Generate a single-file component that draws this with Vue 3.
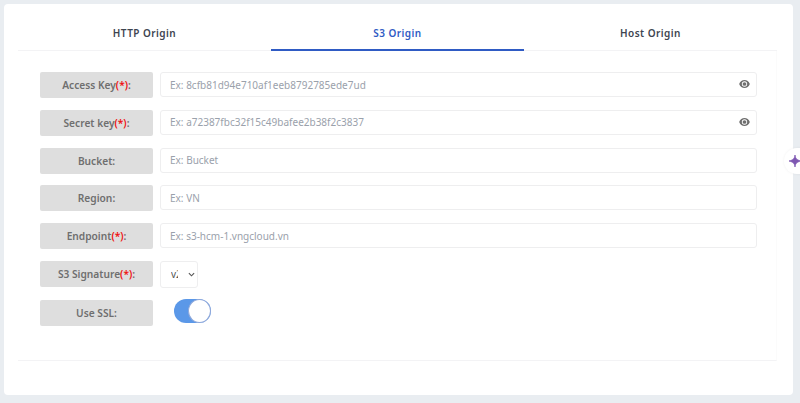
<script setup>
const rows = [
  { label: 'Access Key', req: true, ph: 'Ex: 8cfb81d94e710af1eeb8792785ede7ud', eye: true },
  { label: 'Secret key', req: true, ph: 'Ex: a72387fbc32f15c49bafee2b38f2c3837', eye: true },
  { label: 'Bucket', req: false, ph: 'Ex: Bucket' },
  { label: 'Region', req: false, ph: 'Ex: VN' },
  { label: 'Endpoint', req: true, ph: 'Ex: s3-hcm-1.vngcloud.vn' },
]
const tabs = ['HTTP Origin', 'S3 Origin', 'Host Origin']
</script>

<template>
  <div class="page">
    <div class="card">
      <div class="tabs">
        <div v-for="(t, i) in tabs" :key="t" class="tab" :class="{ active: i === 1 }">{{ t }}</div>
      </div>
      <div class="form">
        <div v-for="r in rows" :key="r.label" class="row">
          <div class="label">{{ r.label }}<span v-if="r.req" class="req">(*)</span>:</div>
          <div class="field">
            <input class="input" type="text" :placeholder="r.ph" />
            <svg v-if="r.eye" class="eye" viewBox="0 0 16 12" width="11" height="8">
              <path fill-rule="evenodd" fill="#6f6f6f" d="M8 0C4.400 0 1.400 2.400 0 6c1.400 3.600 4.400 6 8 6s6.600-2.400 8-6c-1.400-3.600-4.400-6-8-6zm0 10a4 4 0 1 1 0-8 4 4 0 0 1 0 8z"/>
              <circle cx="8" cy="6" r="2.800" fill="#6f6f6f"/>
            </svg>
          </div>
        </div>
        <div class="row">
          <div class="label">S3 Signature<span class="req">(*)</span>:</div>
          <div class="select-wrap">
            <select class="select"><option>v2</option><option>v4</option></select>
            <svg class="chev" viewBox="0 0 8 5" width="7" height="5">
              <path d="M1 1l3 3 3-3" fill="none" stroke="#555" stroke-width="1.300"/>
            </svg>
          </div>
        </div>
        <div class="row last">
          <div class="label">Use SSL:</div>
          <div class="switch"><span class="knob"></span></div>
        </div>
      </div>
    </div>
    <div class="spark">
      <svg viewBox="0 0 16 16" width="12" height="12">
        <path fill="#7e57b2" d="M8 0c.6 4.400 1.600 6.400 8 8-6.400 1.600-7.400 3.600-8 8-.6-4.400-1.600-6.400-8-8 6.400-1.600 7.400-3.600 8-8z" stroke="#7e57b2" stroke-width="1" stroke-linejoin="round"/>
      </svg>
    </div>
  </div>
</template>

<style>
html, body { margin: 0; background: #e9edf1; }
</style>

<style scoped>
.page {
  position: relative;
  height: 403px;
  box-sizing: border-box;
  padding: 4px 7px 8px 4px;
  background: #e9edf1;
  font-family: "Noto Sans", "Open Sans", sans-serif;
  overflow: hidden;
}
.card {
  height: 391px;
  box-sizing: border-box;
  background: #fff;
  border-radius: 4px;
  padding: 0 16px 0 14px;
}
.tabs {
  display: flex;
  height: 46px;
  border-bottom: 1px solid #f3f3f5;
}
.tab {
  flex: 1;
  text-align: center;
  font-size: 10px;
  font-weight: 600;
  letter-spacing: 0.45px;
  line-height: 59px;
  height: 47px;
  box-sizing: border-box;
  color: #3d4450;
}
.tab.active {
  color: #2f5bc4;
  border-bottom: 2px solid #2f5bc4;
}
.form {
  display: flex;
  flex-direction: column;
  gap: 11.800px;
  padding: 21px 19px 0 22px;
  height: 310px;
  box-sizing: border-box;
  border-bottom: 1px solid #f3f3f5;
  border-right: 1px solid #fbfbfb;
}
.row {
  display: flex;
  gap: 7px;
  align-items: flex-start;
  height: 26px;
}
.row.last { margin-top: 1px; }
.label {
  flex: 0 0 113px;
  height: 26px;
  line-height: 26px;
  background: #dedede;
  border-radius: 2px;
  text-align: center;
  font-size: 10.200px;
  font-weight: 600;
  color: #6f6f6f;
}
.req { color: #f01010; }
.field { position: relative; flex: 1; }
.input {
  display: block;
  width: 100%;
  height: 25px;
  box-sizing: border-box;
  border: 1px solid #eeeeef;
  border-radius: 3px;
  padding: 0 9px;
  font: 400 10px "Noto Sans", "Open Sans", sans-serif;
  background: #fff;
  outline: none;
}
.input::placeholder { color: #9aa1ab; opacity: 1; }
.eye { position: absolute; right: 7px; top: 8px; }
.select-wrap { position: relative; width: 38px; height: 27px; }
.select {
  display: block;
  appearance: none;
  width: 38px;
  height: 27px;
  box-sizing: border-box;
  border: 1px solid #eeeeef;
  border-radius: 3px;
  background: #fff;
  color: #555;
  font: 400 10px "Noto Sans", "Open Sans", sans-serif;
  padding: 0 19px 0 10px;
  outline: none;
}
.chev { position: absolute; left: 28px; top: 11px; pointer-events: none; }
.switch {
  position: relative;
  margin-left: 14px;
  margin-top: -1px;
  width: 37px;
  height: 24px;
  border-radius: 12px;
  background: #5b98e8;
}
.knob {
  position: absolute;
  right: 0;
  top: 0;
  width: 23px;
  height: 24px;
  box-sizing: border-box;
  border-radius: 50%;
  background: #fff;
  border: 1px solid #8fa8da;
}
.spark {
  position: absolute;
  left: 784px;
  top: 148px;
  width: 30px;
  height: 26px;
  border-radius: 13px 0 0 13px;
  background: #fff;
  box-shadow: 0 0 3px rgba(0, 0, 0, 0.06);
  display: flex;
  align-items: center;
  padding-left: 5px;
  box-sizing: border-box;
}
</style>
